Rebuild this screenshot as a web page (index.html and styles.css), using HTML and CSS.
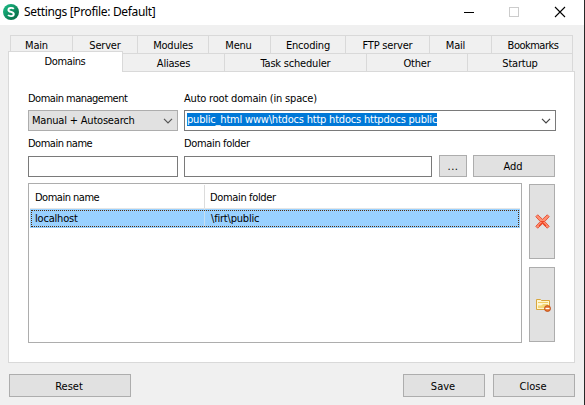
FILE: index.html
```html
<!DOCTYPE html>
<html lang="en">
<head>
<meta charset="utf-8">
<title>Settings</title>
<link rel="stylesheet" href="styles.css">
</head>
<body>
<div class="window">
  <header class="titlebar">
    <svg class="logo" width="16" height="16" viewBox="0 0 16 16">
      <defs><linearGradient id="lg" x1="0" y1="0" x2="1" y2="1"><stop offset="0" stop-color="#1cc08a"/><stop offset="1" stop-color="#05613c"/></linearGradient></defs>
      <circle cx="8" cy="8" r="8" fill="url(#lg)"/>
      <path d="M10.8 4.9C9.6 3.6 5.4 3.3 5.4 5.9c0 2.500 5.4 1.6 5.4 4.200 0 2.700-4.500 2.400-5.800.9" fill="none" stroke="#fff" stroke-width="1.9"/>
    </svg>
    <span class="title">Settings [Profile: Default]</span>
    <svg class="controls" width="102" height="12" viewBox="0 0 102 12" fill="none">
      <path d="M0 6.500h10" stroke="#000"/>
      <rect x="45.500" y="1.500" width="9" height="9" stroke="#ccc"/>
      <path d="M91 1l10 10M101 1L91 11" stroke="#000" stroke-width="1.1"/>
    </svg>
  </header>

  <main class="client">
    <nav class="tabs">
      <div class="tab-row back">
        <div class="tab">Main</div><div class="tab">Server</div><div class="tab">Modules</div><div class="tab">Menu</div><div class="tab">Encoding</div><div class="tab">FTP server</div><div class="tab">Mail</div><div class="tab">Bookmarks</div>
      </div>
      <div class="tab-row front">
        <div class="tab active">Domains</div><div class="tab">Aliases</div><div class="tab">Task scheduler</div><div class="tab">Other</div><div class="tab">Startup</div>
      </div>
    </nav>

    <section class="panel">
      <div class="labels"><span class="tight">Domain management</span><span>Auto root domain (in space)</span></div>
      <div class="fields">
        <div class="select"><span>Manual + Autosearch</span><svg width="10" height="6" viewBox="0 0 10 6"><path d="M1 .8l4 4 4-4" fill="none" stroke="#555" stroke-width="1.2"/></svg></div>
        <div class="combo"><span class="selected-text">public_html www\htdocs http htdocs httpdocs public</span><svg width="10" height="6" viewBox="0 0 10 6"><path d="M1 .8l4 4 4-4" fill="none" stroke="#444" stroke-width="1.2"/></svg></div>
      </div>
      <div class="labels second"><span class="tight">Domain name</span><span class="folder-label">Domain folder</span></div>
      <div class="fields entry">
        <div class="input name"></div>
        <div class="input folder"></div>
        <div class="button browse">...</div>
        <div class="button add">Add</div>
      </div>
      <div class="content">
        <div class="list">
          <div class="list-head"><span class="tight">Domain name</span><span class="folder-label">Domain folder</span></div>
          <div class="list-row"><span>localhost</span><span>\firt\public</span></div>
        </div>
        <div class="side">
          <div class="button">
            <svg width="15" height="15" viewBox="0 0 15 15"><path d="M2.700.8L7.500 5.300 12.300.8l1.900 1.900L9.700 7.500l4.500 4.800-1.900 1.900L7.500 9.700l-4.800 4.500-1.900-1.900L5.300 7.500.8 2.700z" fill="#ff8f70" stroke="#e24e34" stroke-width=".9"/><path d="M4 12l3.500-3.500L11 12M5.500 7.500h4" fill="none" stroke="#ed4424" stroke-width="1.2"/></svg>
          </div>
          <div class="button">
            <svg class="folder-icon" width="16" height="14" viewBox="0 0 16 14"><path d="M1.500 11.500v-10h4l1 1h8v9z" fill="#fff6cf" stroke="#d9a63c"/><path d="M3 4.500h10" stroke="#f0cd62"/><path d="M2.500 10.500V7h4l1.500-1.500h5.500v5z" fill="#f4d878" stroke="#fffae0" stroke-width=".8"/><circle cx="12.500" cy="10.500" r="3" fill="#e4702a" stroke="#bb4a14" stroke-width=".8"/><path d="M10.500 10.500h4" stroke="#fff" stroke-width="1.400"/></svg>
          </div>
        </div>
      </div>
    </section>

    <footer class="actions">
      <div class="button reset">Reset</div>
      <div class="button save">Save</div>
      <div class="button close">Close</div>
    </footer>
  </main>
</div>
</body>
</html>
```
FILE: styles.css
```css
* { box-sizing: border-box; }
body { margin: 0; overflow: hidden; }
.window {
  width: 585px; height: 405px;
  border-right: 1px solid #282828;
  background: #f0f0f0; color: #000;
  font: 11px/13px "DejaVu Sans Condensed", "DejaVu Sans", sans-serif;
  font-stretch: condensed;
  letter-spacing: -.2px;
  white-space: nowrap;
}
svg { display: block; flex: none; }

.titlebar { display: flex; height: 25px; padding: 4px 18px 0 3px; background: #fff; }
.title { margin: 0 auto 0 5px; font: 12px/16px "Noto Sans", sans-serif; letter-spacing: -.34px; }
.controls { margin-top: 2px; }

.client { padding: 10px 9px 0 8px; }
.tab-row { display: grid; }
.tab { height: 18px; padding-top: 3px; border-top: 1px solid #d9d9d9; border-left: 1px solid #d9d9d9; text-align: center; }
.back { width: 563px; margin-left: 2px; grid-template-columns: 62px 65px 71px 62px 75px 84px 62px 82px; }
.back .tab:nth-child(1), .back .tab:nth-child(7) { padding-right: 10px; }
.back .tab:nth-child(4) { padding-right: 2px; }
.back .tab:last-child { padding-left: 2px; letter-spacing: -.5px; }
.tab:last-child { border-right: 1px solid #d9d9d9; }
.front { width: 565px; grid-template-columns: 115px 101px 142px 101px 106px; }
.front .tab:nth-child(2) { border-left: 0; }
.tab.active { height: 21px; margin: -2px 0 -1px; padding-right: 1px; background: #fff; border-right: 1px solid #d9d9d9; position: relative; letter-spacing: -.4px; }

.panel { width: 567px; height: 292px; padding: 20px 18px 0 19px; border: 1px solid #d9d9d9; background: #fff; }
.tight { letter-spacing: -.5px; }
.folder-label { letter-spacing: -.35px; }
.labels { display: grid; grid-template-columns: 156px 1fr; height: 18px; }
.labels.second { height: 17px; margin-top: 6px; }
.fields { display: flex; gap: 6px; }
.select, .combo { display: flex; justify-content: space-between; align-items: center; height: 21px; border: 1px solid #adadad; }
.select { width: 150px; padding: 0 4px 0 3px; background: #e1e1e1; }
.combo { width: 372px; padding: 0 4px 0 2px; border-color: #7a7a7a; }
.selected-text { height: 13px; margin-bottom: 2px; background: #0078d7; color: #fff; }
.entry { align-items: flex-end; height: 23px; }
.input { height: 21px; border: 1px solid #7a7a7a; }
.name { width: 150px; }
.folder { width: 248px; }
.button { display: flex; align-items: center; justify-content: center; border: 1px solid #adadad; background: #e1e1e1; letter-spacing: 0; }
.browse { width: 28px; height: 22px; margin-left: 1px; letter-spacing: .5px; }
.add { width: 82px; height: 22px; padding-right: 2px; }

.content { display: flex; gap: 7px; margin-top: 6px; }
.list { width: 494px; height: 160px; padding: 1px; border: 1px solid #adadad; }
.list-head, .list-row { display: grid; grid-template-columns: 174px 1fr; }
.list-head { height: 24px; border-bottom: 1px solid #e5e5e5; }
.list-head span { padding: 6px 0 0 5px; }
.list-head span + span { border-left: 1px solid #dcdcdc; }
.list-row { height: 19px; background: #99d1ff; outline: 1px dotted #532e0c; outline-offset: -2px; }
.list-row span { padding: 3px 0 0 5px; }
.list-row span + span { padding-left: 6px; border-left: 1px solid #c5def0; }
.side { display: grid; gap: 8px; align-content: start; padding-top: 1px; }
.side .button { width: 26px; height: 75px; }
.folder-icon { margin-left: 2px; }

.actions { display: flex; gap: 8px; margin-top: 11px; padding-left: 1px; }
.actions .button { width: 82px; height: 23px; padding: 2px 2px 0 0; }
.actions .reset { width: 122px; margin-right: auto; }
```
